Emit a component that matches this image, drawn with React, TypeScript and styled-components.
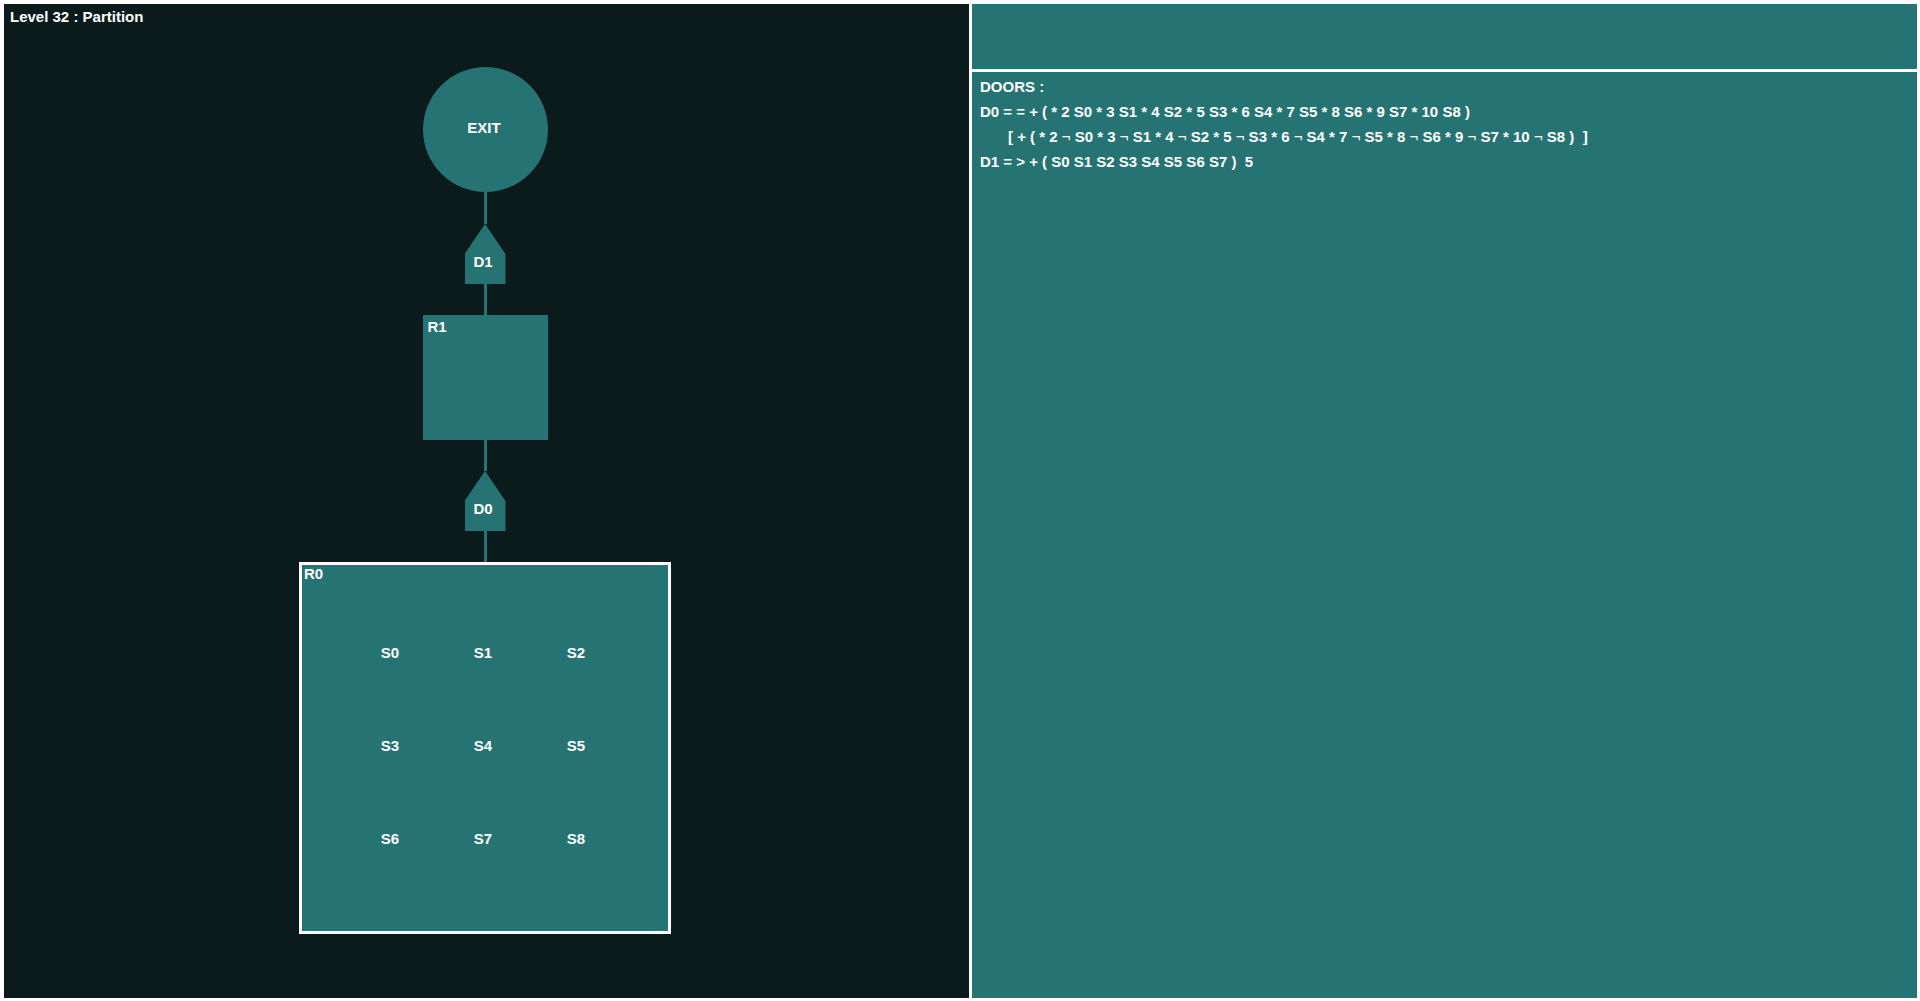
import React from "react";
import styled, { createGlobalStyle } from "styled-components";

const TEAL = "#267373";
const NIGHT = "#0b1a1a";
const WHITE = "#ffffff";

const GlobalStyle = createGlobalStyle`
  * { box-sizing: border-box; }
  body {
    margin: 0;
    background: ${WHITE};
    color: ${WHITE};
    font: bold 15px/25px "Liberation Sans", Arial, sans-serif;
  }
`;

const Page = styled.main`
  display: grid;
  grid-template-columns: 193fr 189fr;
  gap: 3px;
  min-height: 100vh;
  padding: 4px 3px 3px 4px;
`;

const MapPanel = styled.section`
  display: grid;
  background: ${NIGHT};
`;

const Title = styled.h1`
  grid-area: 1 / 1;
  align-self: start;
  margin: 0;
  padding: 0 6px;
  font: inherit;
`;

const Diagram = styled.div`
  grid-area: 1 / 1;
  display: flex;
  flex-direction: column;
  align-items: center;
  justify-content: center;
  padding: 0 3px 1px 0;
`;

const Exit = styled.div`
  display: flex;
  align-items: center;
  justify-content: center;
  width: 125px;
  height: 125px;
  padding: 0 2px 5px 0;
  border-radius: 50%;
  background: ${TEAL};
`;

const Link = styled.div<{ $length: number }>`
  width: 3px;
  height: ${(p) => p.$length}px;
  background: ${TEAL};
`;

const DoorShape = styled.div`
  display: flex;
  align-items: flex-end;
  justify-content: center;
  width: 41px;
  height: 60px;
  padding: 0 4px 10px 0;
  background: ${TEAL};
  clip-path: polygon(50% 0, 100% 50%, 100% 100%, 0 100%, 0 50%);
`;

const Room = styled.div<{ $size: number; $current?: boolean }>`
  width: ${(p) => p.$size}px;
  height: ${(p) => p.$size}px;
  padding: ${(p) => (p.$current ? "0 2px" : "3px 5px")};
  border: ${(p) => (p.$current ? `3px solid ${WHITE}` : "none")};
  background: ${TEAL};
`;

const RoomName = styled.div`
  line-height: 18px;
`;

const Switches = styled.div`
  display: grid;
  grid-template: repeat(3, 93px) / repeat(3, 93px);
  place-items: center;
  justify-content: center;
  padding: 23px 4px 0 0;
`;

const SidePanel = styled.section`
  display: grid;
  grid-template-rows: 65px 1fr;
  gap: 3px;
`;

const Pane = styled.div`
  padding: 2px 8px;
  background: ${TEAL};
`;

const FormulaLine = styled.p<{ $indent?: boolean }>`
  margin: 0;
  padding-left: ${(p) => (p.$indent ? 28 : 0)}px;
  white-space: pre;
`;

const Negation = styled.span`
  font-weight: normal;
`;

const switches = ["S0", "S1", "S2", "S3", "S4", "S5", "S6", "S7", "S8"];

const Door = ({ name }: { name: string }) => <DoorShape>{name}</DoorShape>;

const Formula = ({ text, indent }: { text: string; indent?: boolean }) => (
  <FormulaLine $indent={indent}>
    {text
      .split(/(¬)/)
      .map((part, i) => (part === "¬" ? <Negation key={i}>¬</Negation> : part))}
  </FormulaLine>
);

export default function App() {
  return (
    <>
      <GlobalStyle />
      <Page>
        <MapPanel>
          <Title>Level 32 : Partition</Title>
          <Diagram>
            <Exit>EXIT</Exit>
            <Link $length={32} />
            <Door name="D1" />
            <Link $length={31} />
            <Room $size={125}>
              <RoomName>R1</RoomName>
            </Room>
            <Link $length={31} />
            <Door name="D0" />
            <Link $length={31} />
            <Room $size={372} $current>
              <RoomName>R0</RoomName>
              <Switches>
                {switches.map((s) => (
                  <span key={s}>{s}</span>
                ))}
              </Switches>
            </Room>
          </Diagram>
        </MapPanel>
        <SidePanel>
          <Pane />
          <Pane>
            <Formula text="DOORS :" />
            <Formula text="D0 = = + ( * 2 S0 * 3 S1 * 4 S2 * 5 S3 * 6 S4 * 7 S5 * 8 S6 * 9 S7 * 10 S8 )" />
            <Formula
              indent
              text="[ + ( * 2 ¬ S0 * 3 ¬ S1 * 4 ¬ S2 * 5 ¬ S3 * 6 ¬ S4 * 7 ¬ S5 * 8 ¬ S6 * 9 ¬ S7 * 10 ¬ S8 )  ]"
            />
            <Formula text="D1 = > + ( S0 S1 S2 S3 S4 S5 S6 S7 )  5" />
          </Pane>
        </SidePanel>
      </Page>
    </>
  );
}
